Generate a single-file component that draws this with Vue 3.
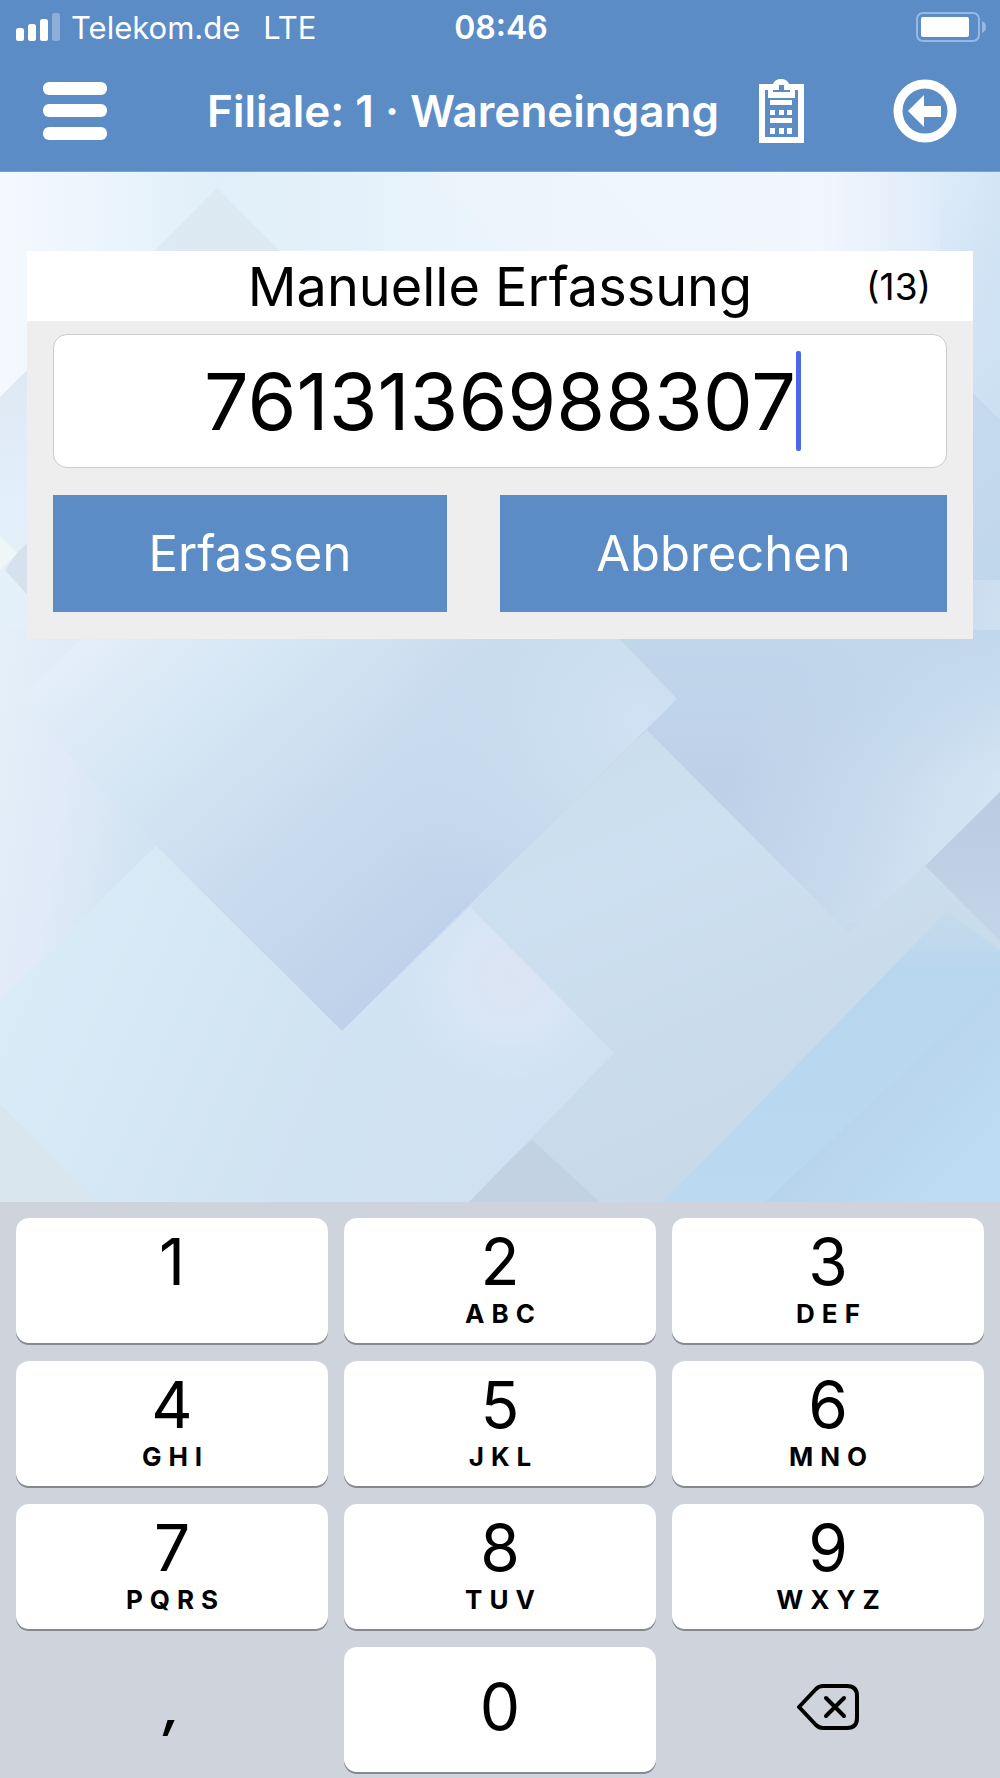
<template>
    <div class="screen">
        <header class="top-bar">
            <div class="status-bar">
                <div class="carrier">
                    <svg class="signal-icon" viewBox="0 0 44 28" aria-hidden="true">
                        <rect x="0" y="15" width="8" height="13" rx="2.5" />
                        <rect x="12" y="11" width="8" height="17" rx="2.5" />
                        <rect x="24" y="6" width="8" height="22" rx="2.5" />
                        <rect x="36" y="0" width="8" height="28" rx="2.5" opacity="0.3" />
                    </svg>
                    <span>Telekom.de</span>
                    <span class="network">LTE</span>
                </div>
                <time class="clock">08:46</time>
                <svg class="battery-icon" viewBox="0 0 70 30" aria-hidden="true">
                    <rect x="1" y="1" width="62" height="28" rx="6" fill="none" stroke="#96b8e4" stroke-width="2" />
                    <rect x="5" y="5" width="48" height="20" rx="2" />
                    <path d="M66 9 Q70 11 70 15 Q70 19 66 21 Z" fill="#96b8e4" />
                </svg>
            </div>
            <nav class="nav-bar">
                <button type="button" class="icon-button" aria-label="Menü">
                    <svg width="64" height="60" viewBox="0 0 64 60">
                        <rect x="0" y="1" width="64" height="13" rx="6" />
                        <rect x="0" y="23" width="64" height="13" rx="6" />
                        <rect x="0" y="46" width="64" height="13" rx="6" />
                    </svg>
                </button>
                <h1 class="nav-title">Filiale: 1 · Wareneingang</h1>
                <button type="button" class="icon-button" aria-label="Liste">
                    <svg width="45" height="64" viewBox="0 0 45 64">
                        <path fill-rule="evenodd" d="M0 5 H14 Q16 0 22 0 Q28 0 30 5 H45 V64 H0 Z M6 11 V58 H39 V11 H36 V19 H9 V11 Z M20 6 V11 H14 V13 H31 V11 H25 V6 Z" />
                        <path d="M11 21 H33 V26 H11 Z M11 39 H33 V44 H11 Z M11 31 H16 V36 H11 Z M20 31 H25 V36 H20 Z M28 31 H33 V36 H28 Z M11 49 H16 V55 H11 Z M20 49 H25 V55 H20 Z M28 49 H33 V55 H28 Z" />
                    </svg>
                </button>
                <button type="button" class="icon-button back" aria-label="Zurück">
                    <svg width="64" height="64" viewBox="0 0 64 64">
                        <circle cx="32" cy="32" r="27" fill="none" stroke="#fff" stroke-width="9" />
                        <path d="M15 32 L31 16 V27 H48 V38 H31 V48 Z" />
                    </svg>
                </button>
            </nav>
        </header>

        <main class="content">
            <svg class="backdrop" viewBox="0 172 1000 1030" preserveAspectRatio="none" aria-hidden="true">
                <defs>
                    <linearGradient id="base" x1="0" y1="0" x2="1" y2="1">
                        <stop offset="0" stop-color="#f5f9ff" />
                        <stop offset="0.3" stop-color="#e3eff9" />
                        <stop offset="0.55" stop-color="#c9ddf0" />
                        <stop offset="1" stop-color="#c5d9ea" />
                    </linearGradient>
                    <linearGradient id="top" x1="0" y1="0" x2="1" y2="0">
                        <stop offset="0" stop-color="#f5f9ff" />
                        <stop offset="0.22" stop-color="#e0eff9" />
                        <stop offset="0.6" stop-color="#eff6fd" />
                        <stop offset="0.82" stop-color="#f2f6fe" />
                        <stop offset="1" stop-color="#d3e6f6" />
                    </linearGradient>
                    <linearGradient id="topFade" x1="0" y1="0" x2="0" y2="1">
                        <stop offset="0" stop-color="#c7dcf0" stop-opacity="0" />
                        <stop offset="0.16" stop-color="#c7dcf0" stop-opacity="0.25" />
                        <stop offset="1" stop-color="#c1d7ec" />
                    </linearGradient>
                    <linearGradient id="peak" x1="0" y1="0" x2="0" y2="1">
                        <stop offset="0" stop-color="#dde9f3" />
                        <stop offset="1" stop-color="#d9e7f2" stop-opacity="0.6" />
                    </linearGradient>
                    <linearGradient id="leftEdge" x1="0" y1="0" x2="0" y2="1">
                        <stop offset="0" stop-color="#dde7f2" />
                        <stop offset="0.5" stop-color="#e2eefa" />
                        <stop offset="1" stop-color="#e5f1f9" />
                    </linearGradient>
                    <linearGradient id="leftPanel" x1="0" y1="0" x2="1" y2="0.4">
                        <stop offset="0" stop-color="#e5eff9" />
                        <stop offset="0.5" stop-color="#e0eaf8" />
                        <stop offset="1" stop-color="#d2e3f1" />
                    </linearGradient>
                    <linearGradient id="center" gradientUnits="userSpaceOnUse" x1="60" y1="640" x2="380" y2="1000">
                        <stop offset="0" stop-color="#e5effa" />
                        <stop offset="0.35" stop-color="#d4e5f3" />
                        <stop offset="0.65" stop-color="#c8dbee" />
                        <stop offset="1" stop-color="#bfd1ea" />
                    </linearGradient>
                    <radialGradient id="centerLight" gradientUnits="userSpaceOnUse" cx="640" cy="720" r="260">
                        <stop offset="0" stop-color="#cfe1f2" />
                        <stop offset="0.4" stop-color="#cadeef" />
                        <stop offset="1" stop-color="#c8dbee" stop-opacity="0" />
                    </radialGradient>
                    <linearGradient id="right" gradientUnits="userSpaceOnUse" x1="730" y1="780" x2="970" y2="860">
                        <stop offset="0" stop-color="#bed0e8" />
                        <stop offset="0.5" stop-color="#c6d9ec" />
                        <stop offset="1" stop-color="#d3e5f4" />
                    </linearGradient>
                    <linearGradient id="rightTop" gradientUnits="userSpaceOnUse" x1="0" y1="630" x2="0" y2="780">
                        <stop offset="0" stop-color="#c1d7ec" />
                        <stop offset="1" stop-color="#c1d7ec" stop-opacity="0" />
                    </linearGradient>
                    <linearGradient id="middle" x1="0" y1="0" x2="0.6" y2="1">
                        <stop offset="0" stop-color="#c9dce9" />
                        <stop offset="0.4" stop-color="#cde0f1" />
                        <stop offset="1" stop-color="#c7d9e8" />
                    </linearGradient>
                    <linearGradient id="corner" x1="0" y1="0" x2="0" y2="1">
                        <stop offset="0" stop-color="#bacbdf" />
                        <stop offset="1" stop-color="#c3d5e8" />
                    </linearGradient>
                    <linearGradient id="bottom" gradientUnits="userSpaceOnUse" x1="40" y1="950" x2="560" y2="1180">
                        <stop offset="0" stop-color="#d9ebf7" />
                        <stop offset="0.5" stop-color="#d1e4f2" />
                        <stop offset="1" stop-color="#cfe1f2" />
                    </linearGradient>
                    <radialGradient id="tipGlow" gradientUnits="userSpaceOnUse" cx="510" cy="980" r="125">
                        <stop offset="0" stop-color="#dce4f3" />
                        <stop offset="0.4" stop-color="#dae6f5" stop-opacity="0.9" />
                        <stop offset="1" stop-color="#d5e6f5" stop-opacity="0" />
                    </radialGradient>
                    <linearGradient id="blue" x1="0" y1="0" x2="0" y2="1">
                        <stop offset="0" stop-color="#bfd9ec" stop-opacity="0.5" />
                        <stop offset="0.2" stop-color="#b9d6ef" />
                        <stop offset="1" stop-color="#bcd9f2" />
                    </linearGradient>
                    <linearGradient id="blueInner" gradientUnits="userSpaceOnUse" x1="850" y1="1080" x2="960" y2="1180">
                        <stop offset="0" stop-color="#b8d3ec" />
                        <stop offset="1" stop-color="#bddcf3" />
                    </linearGradient>
                </defs>
                <rect y="172" width="1000" height="1030" fill="url(#base)" />
                <rect y="172" width="1000" height="468" fill="url(#top)" />
                <rect x="940" y="180" width="60" height="460" fill="url(#topFade)" />
                <path d="M217 188 L330 301 H104 Z" fill="url(#peak)" />
                <path d="M430 172 L520 262 H680 L590 172 Z" fill="#edf3fc" opacity="0.5" />
                <path d="M0 397 L60 337 V650 H0 Z" fill="url(#leftEdge)" />
                <path d="M5 570 L17 553 L50 520 V620 Z" fill="#d5e2ed" />
                <path d="M0 536 L17 553 L0 570 Z" fill="#eef6f8" />
                <path d="M960 380 L1000 420 V640 H940 Z" fill="#bdd3ea" opacity="0.5" />
                <path d="M0 630 H90 L25 697 L156 846 L0 1002 Z" fill="url(#leftPanel)" />
                <path d="M560 580 H1000 V792 L874 918 L820 930 L640 740 Z" fill="url(#right)" />
                <path d="M560 630 H1000 V780 H640 Z" fill="url(#rightTop)" />
                <path d="M1000 792 L925 866 L1000 941 Z" fill="url(#corner)" />
                <path d="M647 730 L848 932 L925 866 L1000 941 V1202 H560 L342 1031 Z" fill="url(#middle)" />
                <path d="M90 630 H611 L677 699 L342 1031 L156 846 L18 700 Z" fill="url(#center)" />
                <path d="M90 630 H611 L677 699 L342 1031 L156 846 L18 700 Z" fill="url(#centerLight)" />
                <path d="M532 1140 L600 1202 H460 Z" fill="#c3d2e3" />
                <path d="M156 846 L342 1031 L470 907 L614 1053 L469 1202 H0 V999 Z" fill="url(#bottom)" />
                <path d="M342 1031 L470 907 L614 1053 L540 1130 H380 Z" fill="url(#tipGlow)" />
                <path d="M0 1104 L96 1202 H0 Z" fill="#d9e6ee" />
                <path d="M947 911 L1000 950 V1202 H663 Z" fill="url(#blue)" />
                <path d="M1000 983 V1202 H765 Z" fill="url(#blueInner)" />
            </svg>

            <form class="card" @submit.prevent>
                <div class="card-header">
                    <label class="card-title" for="barcode">Manuelle Erfassung</label>
                    <span class="counter">({{ code.length }})</span>
                </div>
                <div class="card-body">
                    <div class="field">
                        <input id="barcode" ref="barcode" v-model="code" class="code-input" type="text" inputmode="numeric" autocomplete="off">
                        <span class="caret" :style="{ marginLeft: caretOffset + 'px' }"></span>
                    </div>
                    <div class="actions">
                        <button type="submit" class="action">Erfassen</button>
                        <button type="button" class="action" @click="clear">Abbrechen</button>
                    </div>
                </div>
            </form>
        </main>

        <section class="keypad" aria-label="Tastatur">
            <button v-for="key in keys" :key="key.digit" type="button" class="key" @click="press(key.digit)">
                <span class="digit">{{ key.digit }}</span>
                <span class="letters">{{ key.letters }}</span>
            </button>
            <button type="button" class="key plain comma" @click="press(',')">,</button>
            <button type="button" class="key zero" @click="press('0')">
                <span class="digit">0</span>
            </button>
            <button type="button" class="key plain" aria-label="Löschen" @click="backspace">
                <svg class="backspace-icon" viewBox="0 0 62 46">
                    <path d="M26 2 H50 Q60 2 60 12 V34 Q60 44 50 44 H26 Q22 44 19 41 L2 23 L19 5 Q22 2 26 2 Z" />
                    <path d="M29 14 L47 32 M47 14 L29 32" />
                </svg>
            </button>
        </section>
    </div>
</template>

<script setup>
import { ref, onMounted, watch } from 'vue';

const code = ref('7613136988307');
const barcode = ref(null);
const caretOffset = ref(0);

const keys = [
    { digit: '1', letters: '' },
    { digit: '2', letters: 'ABC' },
    { digit: '3', letters: 'DEF' },
    { digit: '4', letters: 'GHI' },
    { digit: '5', letters: 'JKL' },
    { digit: '6', letters: 'MNO' },
    { digit: '7', letters: 'PQRS' },
    { digit: '8', letters: 'TUV' },
    { digit: '9', letters: 'WXYZ' },
];

onMounted(placeCaret);
watch(code, placeCaret);

// the text is centered, so the caret sits half a text width right of the middle
function placeCaret() {
    const style = getComputedStyle(barcode.value);
    const context = document.createElement('canvas').getContext('2d');
    context.font = `${style.fontWeight} ${style.fontSize} ${style.fontFamily}`;
    caretOffset.value = Math.round(context.measureText(code.value).width / 2);
}

function press(value) {
    code.value += value;
}

function backspace() {
    code.value = code.value.slice(0, -1);
}

function clear() {
    code.value = '';
}
</script>

<style>
body {
    margin: 0;
}
</style>

<style scoped>
.screen {
    display: flex;
    flex-direction: column;
    min-height: 100vh;
    font-family: Inter, "Liberation Sans", sans-serif;
    color: #000;
}

button {
    margin: 0;
    padding: 0;
    border: 0;
    font-family: inherit;
    color: inherit;
    cursor: pointer;
}

/* Header */
.top-bar {
    box-sizing: border-box;
    height: 172px;
    border-bottom: 1px solid #7f9fc4;
    background-color: #5b8cc6;
    color: #fff;
    fill: #fff;
}

.status-bar {
    display: grid;
    grid-template-columns: 1fr auto 1fr;
    align-items: center;
    height: 54px;
    padding: 0 14px 0 16px;
    font-size: 31px;
}

.carrier {
    display: flex;
    align-items: center;
    gap: 11px;
}

.network {
    margin-left: 12px;
}

.signal-icon {
    width: 44px;
    height: 28px;
}

.clock {
    font-size: 32px;
    font-weight: 600;
}

.battery-icon {
    justify-self: end;
    width: 70px;
    height: 30px;
}

.nav-bar {
    display: flex;
    align-items: center;
    height: 114px;
    padding: 0 43px;
}

.nav-title {
    flex: 1;
    margin: 0 40px 0 0;
    font-size: 44px;
    font-weight: 600;
    text-align: right;
}

.icon-button {
    display: flex;
    background: none;
}

.back {
    margin-left: 89px;
}

/* Content */
.content {
    position: relative;
    flex: 1;
    padding: 79px 27px;
}

.backdrop {
    position: absolute;
    top: 0;
    left: 0;
    width: 100%;
    height: 100%;
}

.card {
    position: relative;
    background-color: #eee;
}

.card-header {
    display: grid;
    grid-template-columns: 1fr auto 1fr;
    align-items: center;
    height: 70px;
    padding: 0 42px;
    background-color: #fff;
}

.card-title {
    grid-column: 2;
    font-size: 54px;
}

.counter {
    justify-self: end;
    font-size: 37px;
}

.card-body {
    padding: 13px 26px 27px;
}

.field {
    position: relative;
}

.code-input {
    box-sizing: border-box;
    display: block;
    width: 100%;
    height: 134px;
    padding: 0;
    border: 1px solid #ccc;
    border-radius: 14px;
    background-color: #fff;
    font-family: inherit;
    font-size: 79px;
    text-align: center;
    color: #000;
    caret-color: transparent;
    outline: none;
}

.caret {
    position: absolute;
    top: 17px;
    left: 50%;
    width: 5px;
    height: 100px;
    border-radius: 2px;
    background-color: #4a68e8;
}

.actions {
    display: grid;
    grid-template-columns: 394fr 447fr;
    gap: 53px;
    margin-top: 27px;
}

.action {
    height: 117px;
    background-color: #5b8cc6;
    font-size: 49px;
    color: #fff;
}

/* Keypad */
.keypad {
    display: grid;
    grid-template-columns: repeat(3, 1fr);
    grid-auto-rows: 125px;
    gap: 18px 16px;
    padding: 16px 16px 6px;
    background-color: #ced3dc;
}

.key {
    display: flex;
    flex-direction: column;
    align-items: center;
    padding-top: 12px;
    border-radius: 13px;
    background-color: #fff;
    box-shadow: 0 2px 0 #85888d;
}

.digit {
    font-size: 64px;
    line-height: 64px;
}

.letters {
    margin-top: 4px;
    padding-left: 7px;
    font-size: 26px;
    font-weight: 700;
    line-height: 32px;
    letter-spacing: 7px;
}

.zero {
    justify-content: center;
    padding: 0 0 6px;
}

.plain {
    justify-content: center;
    padding: 0 0 6px;
    background: none;
    box-shadow: none;
}

.comma {
    font-size: 54px;
    font-style: italic;
    font-weight: 600;
}

.backspace-icon {
    width: 62px;
    height: 46px;
    fill: none;
    stroke: #000;
    stroke-width: 4;
    stroke-linecap: round;
    stroke-linejoin: round;
}
</style>
